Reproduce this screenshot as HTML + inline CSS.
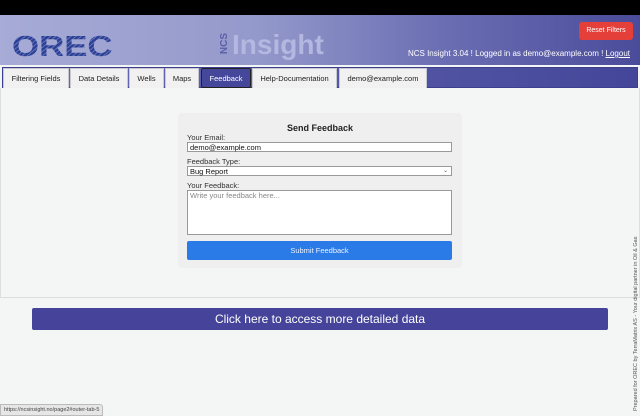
<!DOCTYPE html>
<html><head><meta charset="utf-8"><style>
*{margin:0;padding:0;box-sizing:border-box}
body{width:640px;height:416px;overflow:hidden;background:#f4f5f5;font-family:"Liberation Sans",sans-serif;position:relative}
.top{position:absolute;left:0;top:0;width:640px;height:15px;background:#000}
.hdr{position:absolute;left:0;top:15px;width:640px;height:50px;background:linear-gradient(90deg,#a7abd6 0%,#9499cb 40%,#6a6db2 70%,#4a4c9b 100%)}
.logo{position:absolute;left:12px;top:31px;font:900 29px "Liberation Sans",sans-serif;letter-spacing:0px;transform:scaleX(1.2);transform-origin:left;background:repeating-linear-gradient(135deg,#2d3f92 0 2px,#5c6fb8 2px 3px);-webkit-background-clip:text;background-clip:text;-webkit-text-fill-color:transparent}
.ncs{position:absolute;left:214px;top:38px;font:bold 10px "Liberation Sans",sans-serif;color:#5a5fa8;transform:rotate(-90deg);transform-origin:center}
.ins{position:absolute;left:232px;top:29px;font:bold 28px "Liberation Sans",sans-serif;color:#b4b7e0}
.reset{position:absolute;left:579px;top:22px;width:54px;height:18px;background:#e53f3a;color:#fff;font-size:7px;border-radius:3px;text-align:center;line-height:18px}
.login{position:absolute;right:10px;top:49px;font-size:8px;color:#fff}
.login u{text-decoration:underline}
.tabbar{position:absolute;left:2px;top:67px;width:636px;height:21px;background:linear-gradient(90deg,#6a6cb2,#44469a);border:1px solid #3c3e8e}
.tab{position:absolute;top:68px;height:20px;background:#f1f1f1;border:1px solid #c8c8d0;border-bottom:none;font-size:7.5px;color:#222;line-height:19px;text-align:center}
.tab.act{background:#44479a;color:#fff;border:1px solid #222;border-radius:2px}
.main{position:absolute;left:0;top:88px;width:640px;height:210px;border:1px solid #ddd;border-top:none;background:#f4f5f5}
.form{position:absolute;left:178px;top:113px;width:284px;height:155px;background:#efefef;border-radius:4px}
.form h3{position:absolute;left:0;width:100%;top:10px;text-align:center;font-size:9px;color:#222}
.lbl{position:absolute;left:9px;font-size:7.5px;color:#333}
.inp{position:absolute;left:9px;width:265px;background:#fff;border:1px solid #999;font-size:7.5px;color:#111;padding-left:2px}
.btn{position:absolute;left:9px;top:128px;width:265px;height:19px;background:#2a7be8;border-radius:2px;color:#eaf2ff;font-size:7.5px;text-align:center;line-height:19px}
.big{position:absolute;left:32px;top:308px;width:576px;height:22px;background:#45449a;border-radius:2px;color:#fff;font-size:12px;text-align:center;line-height:22px}
.side{position:absolute;left:633px;top:411px;transform:rotate(-90deg);transform-origin:left top;white-space:nowrap;font-size:5.5px;color:#555}
.status{position:absolute;left:0;top:404px;height:12px;padding:0 3px;background:#e6e6e6;border:1px solid #bbb;border-radius:0 3px 0 0;font-size:5.5px;color:#444;line-height:11px}
</style></head><body>
<div class="top"></div>
<div class="hdr"></div>
<div class="logo">OREC</div>
<div class="ncs">NCS</div>
<div class="ins">Insight</div>
<div class="reset">Reset Filters</div>
<div class="login">NCS Insight 3.04 ! Logged in as demo@example.com ! <u>Logout</u></div>
<div class="tabbar"></div>
<div class="tab" style="left:3px;width:66px">Filtering Fields</div>
<div class="tab" style="left:70px;width:58px">Data Details</div>
<div class="tab" style="left:129px;width:35px">Wells</div>
<div class="tab" style="left:165px;width:34px">Maps</div>
<div class="tab act" style="left:201px;width:50px">Feedback</div>
<div class="tab" style="left:252px;width:85px">Help-Documentation</div>
<div class="tab" style="left:339px;width:88px">demo@example.com</div>
<div class="main"></div>
<div class="form">
<h3>Send Feedback</h3>
<div class="lbl" style="top:20px">Your Email:</div>
<div class="inp" style="top:29px;height:10px;line-height:9px">demo@example.com</div>
<div class="lbl" style="top:44px">Feedback Type:</div>
<div class="inp" style="top:53px;height:10px;line-height:9px">Bug Report<span style="position:absolute;right:3px;font-size:6px;color:#666">&#8964;</span></div>
<div class="lbl" style="top:68px">Your Feedback:</div>
<div class="inp" style="top:77px;height:45px;color:#888;line-height:9px">Write your feedback here...</div>
<div class="btn">Submit Feedback</div>
</div>
<div class="big">Click here to access more detailed data</div>
<div class="side">Prepared for OREC by TerraMatrix AS - Your digital partner in Oil &amp; Gas</div>
<div class="status">https://ncsinsight.no/page2#outer-tab-5</div>
</body></html>
